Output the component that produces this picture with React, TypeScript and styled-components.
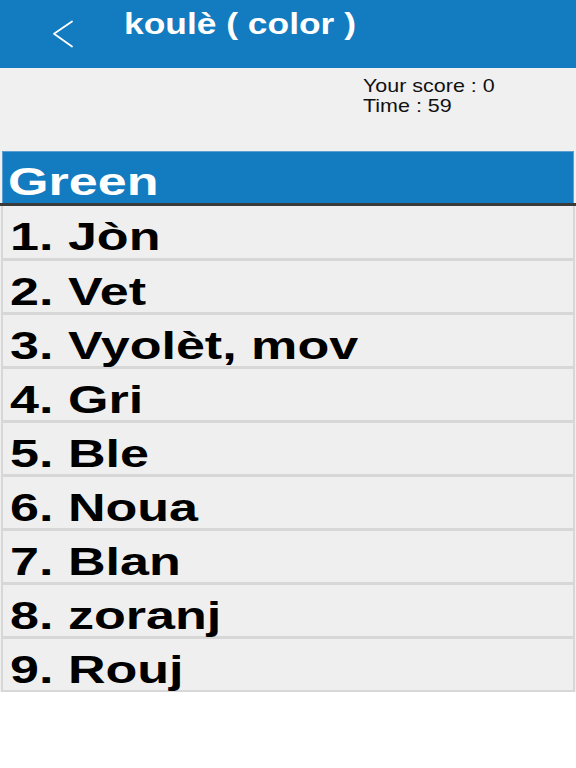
import React from 'react';
import styled, { createGlobalStyle } from 'styled-components';

const GlobalStyle = createGlobalStyle`
  html, body {
    margin: 0;
    padding: 0;
    background: #ffffff;
    font-family: "Liberation Sans", Arial, sans-serif;
  }
`;

const Page = styled.div`
  width: 576px;
  min-height: 768px;
  background: #ffffff;
  display: flex;
  flex-direction: column;
`;

const Header = styled.header`
  height: 68px;
  background: #137bbf;
  display: flex;
  align-items: flex-start;
`;

const BackButton = styled.button`
  width: 124px;
  height: 68px;
  border: none;
  background: transparent;
  padding: 20px 0 0 52px;
  display: flex;
  align-items: flex-start;
  cursor: pointer;
`;

const Title = styled.h1`
  margin: 0;
  padding-top: 8px;
  color: #ffffff;
  font-size: 29px;
  font-weight: 700;
  white-space: nowrap;
  transform: scaleX(1.22);
  transform-origin: left center;
`;

const Info = styled.section`
  height: 83px;
  background: #f0f0f0;
  display: flex;
  justify-content: flex-start;
  padding-left: 363px;
`;

const Stats = styled.div`
  padding-top: 8px;
  font-size: 19px;
  line-height: 20px;
  color: #111111;
  transform: scaleX(1.13);
  transform-origin: left top;
`;

const Board = styled.div`
  background: #f0f0f0;
  display: flex;
  flex-direction: column;
`;

const Question = styled.div`
  margin: 0 2px;
  height: 52px;
  background: #137bbf;
  border: 1px solid #5a9fcf;
  border-bottom: none;
  box-sizing: border-box;
  display: flex;
  align-items: center;
  padding: 9px 0 0 5px;
`;

const Divider = styled.div`
  height: 3px;
  background: #3a3a3a;
`;

const Choices = styled.ul`
  list-style: none;
  margin: 0;
  padding: 0;
  display: flex;
  flex-direction: column;
`;

const Choice = styled.li<{ $first?: boolean }>`
  height: 54px;
  box-sizing: border-box;
  margin: 0 1px;
  border: 2px solid #d7d7d7;
  border-top-width: ${p => (p.$first ? 0 : 1)}px;
  background: #efefef;
  display: flex;
  align-items: center;
  padding: 10px 0 0 7px;
`;

const BigText = styled.span<{ $light?: boolean }>`
  font-size: 38px;
  line-height: 40px;
  font-weight: 700;
  color: ${p => (p.$light ? '#ffffff' : '#000000')};
  white-space: nowrap;
  transform: scaleX(1.37);
  transform-origin: left center;
  display: inline-block;
`;

const choices = ['Jòn', 'Vet', 'Vyolèt, mov', 'Gri', 'Ble', 'Noua', 'Blan', 'zoranj', 'Rouj'];

export default function App() {
  return (
    <Page>
      <GlobalStyle />
      <Header>
        <BackButton aria-label="Back">
          <svg width="22" height="28" viewBox="0 0 22 28" fill="none">
            <path d="M20 1.5 L2 13.8 L20 26.5" stroke="#ffffff" strokeWidth="1.8" strokeLinecap="round" strokeLinejoin="round" />
          </svg>
        </BackButton>
        <Title>koulè ( color )</Title>
      </Header>
      <Info>
        <Stats>
          <div>Your score : 0</div>
          <div>Time : 59</div>
        </Stats>
      </Info>
      <Board>
        <Question>
          <BigText $light>Green</BigText>
        </Question>
        <Divider />
        <Choices>
          {choices.map((c, i) => (
            <Choice key={c} $first={i === 0}>
              <BigText>{`${i + 1}. ${c}`}</BigText>
            </Choice>
          ))}
        </Choices>
      </Board>
    </Page>
  );
}
